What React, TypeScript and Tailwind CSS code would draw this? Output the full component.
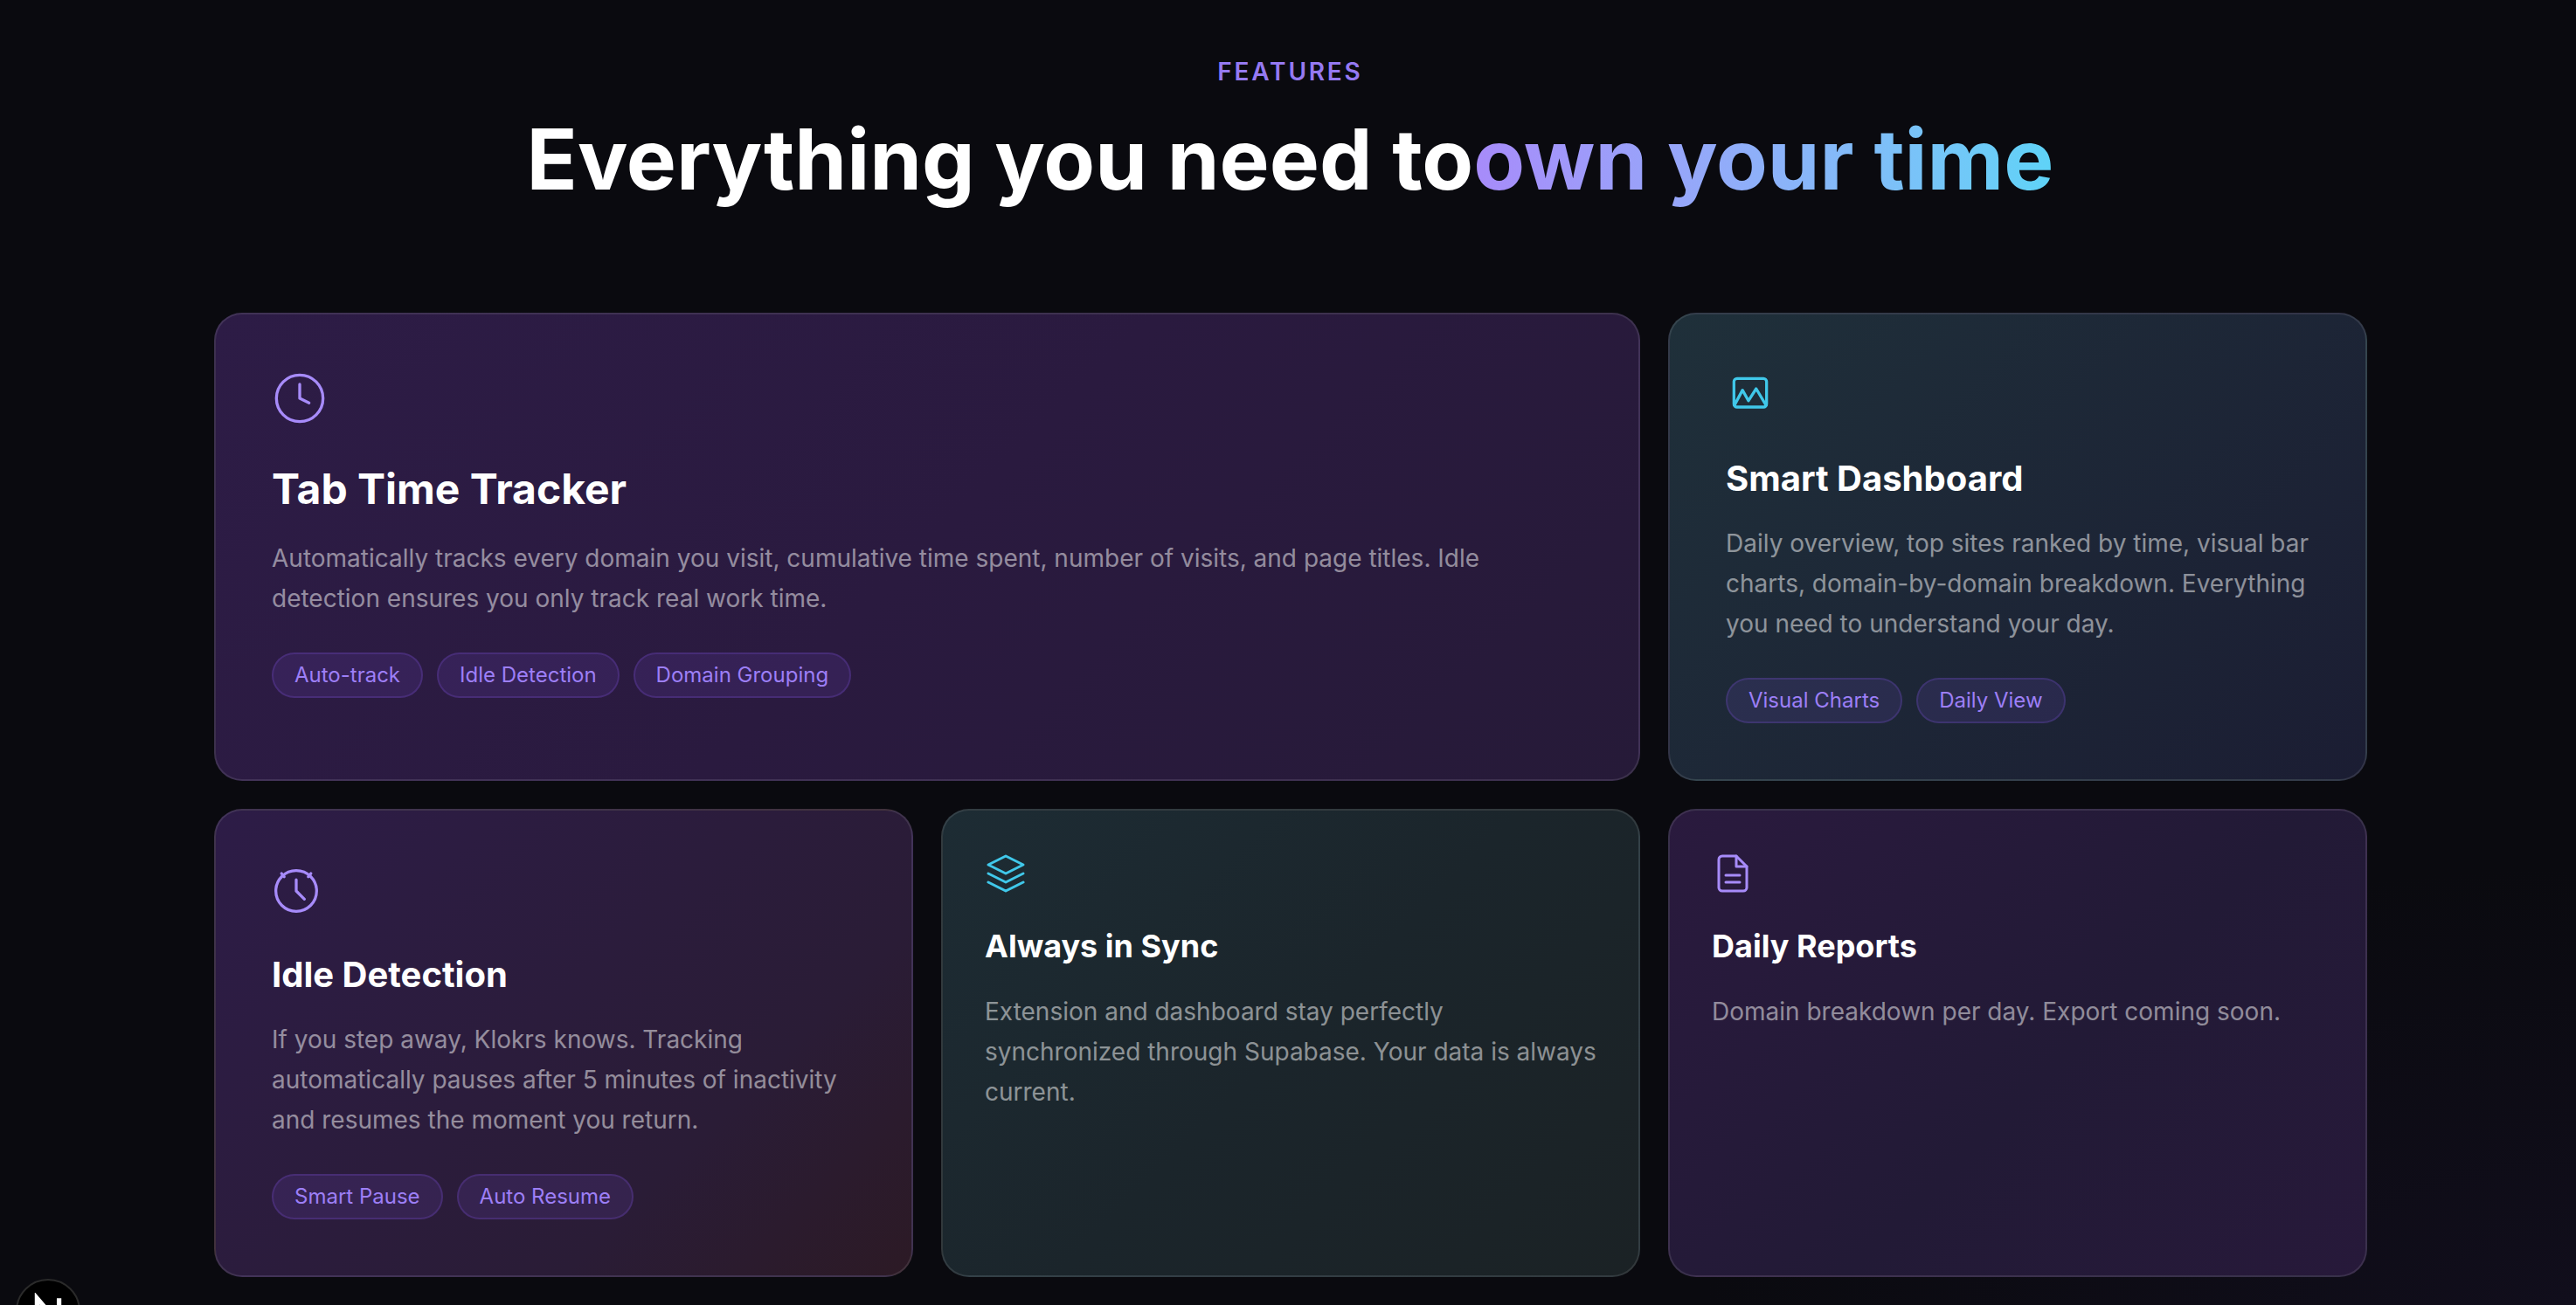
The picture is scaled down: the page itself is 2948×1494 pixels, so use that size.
import React from "react";

// page is laid out at the reference's device pixels, so sizes look large
const Tag = ({ children }: { children: React.ReactNode }) => (
  <span className="flex h-[52px] items-center rounded-full border-2 border-[#8b5cf633] bg-[#8b5cf61f] px-[24px] text-[24px] text-[#9d7ff7]">
    {children}
  </span>
);

const Tags = ({ items }: { items: string[] }) => (
  <div className="mt-[39px] flex gap-[16px]">
    {items.map((t) => (
      <Tag key={t}>{t}</Tag>
    ))}
  </div>
);

const Body = ({ children }: { children: React.ReactNode }) => (
  <p className="mt-[24px] text-[28px] leading-[46px] text-white/50">{children}</p>
);

const ClockIcon = () => (
  <svg viewBox="0 0 24 24" fill="none" stroke="#a78bfa" strokeWidth="1.25" strokeLinecap="round" strokeLinejoin="round" className="h-[64px] w-[64px]">
    <circle cx="12" cy="12" r="10" />
    <polyline points="12 6 12 12 16 14" />
  </svg>
);

const ChartIcon = () => (
  <svg viewBox="0 0 24 24" fill="none" stroke="#40c8ea" strokeWidth="1.4" strokeLinecap="round" strokeLinejoin="round" className="h-[56px] w-[56px]">
    <rect x="4" y="4" width="16" height="14" rx="1.5" />
    <polyline points="4.2 17.2 8.2 9.7 11.1 14.9 14.9 9 19.8 17.2" />
  </svg>
);

const IdleIcon = () => (
  <svg viewBox="0 0 24 24" fill="none" stroke="#a78bfa" strokeWidth="1.4" strokeLinecap="round" strokeLinejoin="round" className="h-[56px] w-[56px]">
    <circle cx="12" cy="12" r="10" />
    <polyline points="12 6.5 12 12 16 16" />
    <path d="M4.8 3.4 6.1 5M19.2 3.4 17.9 5" />
  </svg>
);

const LayersIcon = () => (
  <svg viewBox="0 0 24 24" fill="none" stroke="#40c8ea" strokeWidth="1.5" strokeLinecap="round" strokeLinejoin="round" className="h-[48px] w-[48px]">
    <polygon points="12 2 2 7 12 12 22 7 12 2" />
    <polyline points="2 17 12 22 22 17" />
    <polyline points="2 12 12 17 22 12" />
  </svg>
);

const FileIcon = () => (
  <svg viewBox="0 0 24 24" fill="none" stroke="#a78bfa" strokeWidth="1.5" strokeLinecap="round" strokeLinejoin="round" className="h-[48px] w-[48px]">
    <path d="M14 2H6a2 2 0 0 0-2 2v16a2 2 0 0 0 2 2h12a2 2 0 0 0 2-2V8z" />
    <polyline points="14 2 14 8 20 8" />
    <line x1="16" y1="13" x2="8" y2="13" />
    <line x1="16" y1="17" x2="8" y2="17" />
  </svg>
);

export default function App() {
  return (
    <main className="relative h-screen overflow-hidden bg-[#0a0a0f] bg-[radial-gradient(ellipse_1000px_500px_at_100%_100%,#110e1c,transparent)] font-['Inter',sans-serif]">
      <div className="flex flex-col items-center pt-[66px] pl-[5px]">
        <div className="text-[28px] leading-[32px] font-semibold tracking-[2.8px] text-[#9579f2]">FEATURES</div>
        <h1 className="mt-[26px] flex text-[96px] leading-[116px] font-bold text-white">
          <span>Everything you need to</span>
          <span className="bg-gradient-to-r from-[#a78bfa] to-[#5ed3f7] bg-clip-text text-transparent">own your time</span>
        </h1>
      </div>

      <div className="mt-[118px] ml-[245px] grid w-[2464px] grid-cols-3 grid-rows-[536px_536px] gap-[32px]">
        <section className="col-span-2 rounded-[32px] border-2 border-[#ffffff1a] bg-[linear-gradient(135deg,#2d1c46,#2a1a3f_50%,#261a38)] p-[64px]">
          <ClockIcon />
          <h3 className="mt-[40px] text-[48px] leading-[64px] font-bold text-white">Tab Time Tracker</h3>
          <Body>
            Automatically tracks every domain you visit, cumulative time spent, number of visits, and page titles. Idle detection ensures you only track real work time.
          </Body>
          <Tags items={["Auto-track", "Idle Detection", "Domain Grouping"]} />
        </section>

        <section className="rounded-[32px] border-2 border-[#ffffff1a] bg-[linear-gradient(135deg,#1f303a,#1b1d33)] p-[64px]">
          <ChartIcon />
          <h3 className="mt-[40px] text-[40px] leading-[55px] font-bold text-white">Smart Dashboard</h3>
          <Body>Daily overview, top sites ranked by time, visual bar charts, domain-by-domain breakdown. Everything you need to understand your day.</Body>
          <Tags items={["Visual Charts", "Daily View"]} />
        </section>

        <section className="rounded-[32px] border-2 border-[#ffffff1a] bg-[linear-gradient(135deg,#2d1c47,#2a1c36_70%,#2c1a25)] p-[64px]">
          <IdleIcon />
          <h3 className="mt-[40px] text-[40px] leading-[55px] font-bold text-white">Idle Detection</h3>
          <Body>If you step away, Klokrs knows. Tracking automatically pauses after 5 minutes of inactivity and resumes the moment you return.</Body>
          <Tags items={["Smart Pause", "Auto Resume"]} />
        </section>

        <section className="rounded-[32px] border-2 border-[#ffffff1a] bg-[linear-gradient(135deg,#1d2c34,#1b252b_50%,#1b2225)] p-[48px]">
          <LayersIcon />
          <h3 className="mt-[32px] text-[36px] leading-[55px] font-bold text-white">Always in Sync</h3>
          <Body>Extension and dashboard stay perfectly synchronized through Supabase. Your data is always current.</Body>
        </section>

        <section className="rounded-[32px] border-2 border-[#ffffff1a] bg-[linear-gradient(135deg,#2a1a3e,#221a36_55%,#27193a)] p-[48px]">
          <FileIcon />
          <h3 className="mt-[32px] text-[36px] leading-[55px] font-bold text-white">Daily Reports</h3>
          <Body>Domain breakdown per day. Export coming soon.</Body>
        </section>
      </div>

      {/* dev tools badge, cut off by the window */}
      <div className="absolute top-[1464px] left-[18px] flex h-[74px] w-[74px] items-center justify-center rounded-full border-2 border-[#2a2a2a] bg-black">
        <svg viewBox="0 0 40 40" className="h-[42px] w-[42px]" fill="none" stroke="white" strokeWidth="5">
          <path d="M8 34V6L32 34M32 6V28" />
        </svg>
      </div>
    </main>
  );
}
